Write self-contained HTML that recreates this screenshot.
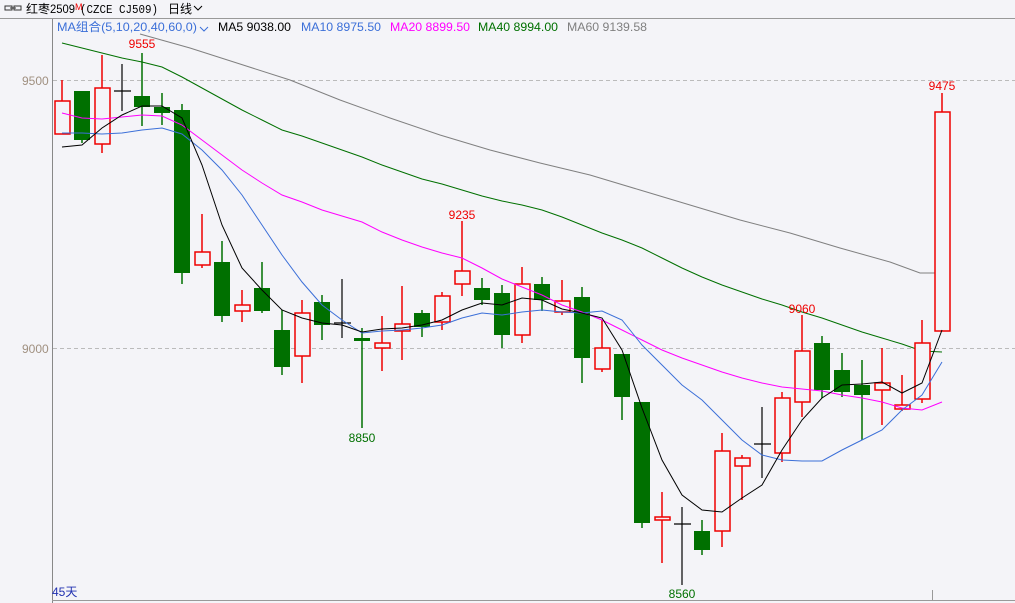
<!DOCTYPE html><html><head><meta charset="utf-8"><style>
body{margin:0;background:#f4f4f8;width:1015px;height:603px;overflow:hidden;font-family:"Liberation Sans","Noto Sans CJK SC",sans-serif}
</style></head><body>
<svg width="1015" height="603" xmlns="http://www.w3.org/2000/svg" style="position:absolute;left:0;top:0">
<rect width="1015" height="603" fill="#f4f4f8"/>
<g font-family="Liberation Sans,Noto Sans CJK SC,sans-serif" font-size="12">
<rect x="5" y="6" width="7" height="4" fill="none" stroke="#333"/><rect x="14" y="6" width="7" height="4" fill="none" stroke="#333"/><line x1="10" y1="8" x2="16" y2="8" stroke="#333"/>
<text x="26" y="13" fill="#000">红枣</text><text x="50" y="13" fill="#000" textLength="25" lengthAdjust="spacingAndGlyphs">2509</text><text x="75" y="10" fill="#e00" font-size="9">M</text>
<text x="80" y="13" fill="#000" font-family="Liberation Mono,monospace" font-size="12" textLength="78" lengthAdjust="spacingAndGlyphs">(CZCE CJ509)</text>
<text x="168" y="13" fill="#000">日线</text><path d="M194 6l4 4 4-4" stroke="#000" fill="none"/>
<line x1="0" y1="18.5" x2="1015" y2="18.5" stroke="#999"/>
<text x="57" y="31" fill="#3b6fd8" textLength="140" lengthAdjust="spacingAndGlyphs">MA组合(5,10,20,40,60,0)</text><path d="M200 27l4 4 4-4" stroke="#3b6fd8" fill="none"/>
<text x="218" y="31" fill="#000" textLength="73" lengthAdjust="spacingAndGlyphs">MA5 9038.00</text>
<text x="301" y="31" fill="#3b6fd8" textLength="80" lengthAdjust="spacingAndGlyphs">MA10 8975.50</text>
<text x="390" y="31" fill="#f0f" textLength="80" lengthAdjust="spacingAndGlyphs">MA20 8899.50</text>
<text x="478" y="31" fill="#007000" textLength="80" lengthAdjust="spacingAndGlyphs">MA40 8994.00</text>
<text x="567" y="31" fill="#808080" textLength="80" lengthAdjust="spacingAndGlyphs">MA60 9139.58</text>
</g>
<line x1="52.5" y1="19" x2="52.5" y2="603" stroke="#888"/>
<line x1="52" y1="600.5" x2="1015" y2="600.5" stroke="#999"/>
<line x1="932.5" y1="590" x2="932.5" y2="600" stroke="#999"/>
<line x1="53" y1="80.5" x2="1015" y2="80.5" stroke="#bbb" stroke-dasharray="4,3"/>
<line x1="53" y1="348.5" x2="1015" y2="348.5" stroke="#bbb" stroke-dasharray="4,3"/>
<text x="22" y="85" fill="#a09080" font-size="12" font-family="Liberation Sans,sans-serif">9500</text>
<text x="22" y="353" fill="#a09080" font-size="12" font-family="Liberation Sans,sans-serif">9000</text>
<g fill="none" stroke-width="1">
<polyline stroke="#808080" points="140,34 190,48 240,64 290,80 340,100 390,118 440,135 490,150 540,163 590,175 640,190 690,205 740,220 790,233 840,248 890,262 920,273 942,273"/>
<polyline stroke="#007000" points="62,43 82,48 102,53 122,58 142,62 162,67 182,77 202,88 222,99 242,110 262,120 282,130 302,136 322,143 342,150 362,157 382,165 402,172 422,179 442,184 462,190 482,196 502,201 522,205 542,210 562,217 582,225 602,233 622,240 642,248 662,258 682,268 702,277 722,285 742,292 762,299 782,305 802,312 822,318 842,325 862,332 882,338 902,344 922,351 942,352"/>
</g>
<g>
<g stroke="#e00" stroke-width="1.5" fill="#f4f4f8">
<line x1="62" y1="80" x2="62" y2="134"/><rect x="55" y="101" width="15" height="33"/>
<line x1="102" y1="55" x2="102" y2="153"/><rect x="95" y="88" width="15" height="56"/>
<line x1="202" y1="214" x2="202" y2="268"/><rect x="195" y="252" width="15" height="13"/>
<line x1="242" y1="290" x2="242" y2="322"/><rect x="235" y="305" width="15" height="6"/>
<line x1="302" y1="300" x2="302" y2="383"/><rect x="295" y="313" width="15" height="43"/>
<line x1="382" y1="316" x2="382" y2="371"/><rect x="375" y="343" width="15" height="5"/>
<line x1="402" y1="286" x2="402" y2="360"/><rect x="395" y="324" width="15" height="7"/>
<line x1="442" y1="292" x2="442" y2="330"/><rect x="435" y="296" width="15" height="26"/>
<line x1="462" y1="221" x2="462" y2="296"/><rect x="455" y="271" width="15" height="13"/>
<line x1="522" y1="267" x2="522" y2="343"/><rect x="515" y="284" width="15" height="51"/>
<line x1="562" y1="280" x2="562" y2="315"/><rect x="555" y="301" width="15" height="11"/>
<line x1="602" y1="320" x2="602" y2="372"/><rect x="595" y="348" width="15" height="21"/>
<line x1="662" y1="492" x2="662" y2="563"/><rect x="655" y="517" width="15" height="3"/>
<line x1="722" y1="433" x2="722" y2="547"/><rect x="715" y="451" width="15" height="80"/>
<line x1="742" y1="455" x2="742" y2="500"/><rect x="735" y="458" width="15" height="8"/>
<line x1="782" y1="392" x2="782" y2="462"/><rect x="775" y="398" width="15" height="55"/>
<line x1="802" y1="315" x2="802" y2="417"/><rect x="795" y="351" width="15" height="51"/>
<line x1="882" y1="348" x2="882" y2="425"/><rect x="875" y="383" width="15" height="7"/>
<line x1="902" y1="375" x2="902" y2="411"/><rect x="895" y="405" width="15" height="4"/>
<line x1="922" y1="320" x2="922" y2="403"/><rect x="915" y="343" width="15" height="56"/>
<line x1="942" y1="93" x2="942" y2="112"/><rect x="935" y="112" width="15" height="219"/>
</g>
<g stroke="#007000" stroke-width="1.5" fill="#007000">
<line x1="82" y1="91" x2="82" y2="143"/><rect x="74" y="91" width="16" height="49" stroke="none"/>
<line x1="142" y1="53" x2="142" y2="126"/><rect x="134" y="96" width="16" height="11" stroke="none"/>
<line x1="162" y1="93" x2="162" y2="125"/><rect x="154" y="107" width="16" height="6" stroke="none"/>
<line x1="182" y1="104" x2="182" y2="284"/><rect x="174" y="110" width="16" height="163" stroke="none"/>
<line x1="222" y1="241" x2="222" y2="322"/><rect x="214" y="262" width="16" height="54" stroke="none"/>
<line x1="262" y1="262" x2="262" y2="313"/><rect x="254" y="288" width="16" height="23" stroke="none"/>
<line x1="282" y1="310" x2="282" y2="375"/><rect x="274" y="330" width="16" height="37" stroke="none"/>
<line x1="322" y1="295" x2="322" y2="340"/><rect x="314" y="302" width="16" height="23" stroke="none"/>
<line x1="362" y1="328" x2="362" y2="428"/><rect x="354" y="338" width="16" height="3" stroke="none"/>
<line x1="422" y1="310" x2="422" y2="337"/><rect x="414" y="313" width="16" height="14" stroke="none"/>
<line x1="482" y1="278" x2="482" y2="305"/><rect x="474" y="288" width="16" height="12" stroke="none"/>
<line x1="502" y1="285" x2="502" y2="348"/><rect x="494" y="293" width="16" height="42" stroke="none"/>
<line x1="542" y1="277" x2="542" y2="311"/><rect x="534" y="284" width="16" height="16" stroke="none"/>
<line x1="582" y1="287" x2="582" y2="383"/><rect x="574" y="297" width="16" height="61" stroke="none"/>
<line x1="622" y1="354" x2="622" y2="420"/><rect x="614" y="354" width="16" height="43" stroke="none"/>
<line x1="642" y1="402" x2="642" y2="528"/><rect x="634" y="402" width="16" height="121" stroke="none"/>
<line x1="702" y1="520" x2="702" y2="555"/><rect x="694" y="531" width="16" height="19" stroke="none"/>
<line x1="822" y1="336" x2="822" y2="398"/><rect x="814" y="343" width="16" height="47" stroke="none"/>
<line x1="842" y1="353" x2="842" y2="397"/><rect x="834" y="370" width="16" height="22" stroke="none"/>
<line x1="862" y1="360" x2="862" y2="440"/><rect x="854" y="385" width="16" height="10" stroke="none"/>
</g>
<g stroke="#000" stroke-width="1.2">
<line x1="122" y1="64" x2="122" y2="111"/><line x1="114" y1="91" x2="131" y2="91"/>
<line x1="342" y1="279" x2="342" y2="338"/><line x1="334" y1="323" x2="351" y2="323"/>
<line x1="682" y1="507" x2="682" y2="585"/><line x1="674" y1="524" x2="691" y2="524"/>
<line x1="762" y1="407" x2="762" y2="478"/><line x1="754" y1="444" x2="771" y2="444"/>
</g>
</g>
<g fill="none" stroke-width="1">
<polyline stroke="#f0f" points="62,113 82,118 102,119 122,117 142,115 162,116 182,125 202,140 222,155 242,170 262,183 282,195 302,202 322,210 342,216 362,222 382,232 402,240 422,247 442,253 462,258 482,268 502,279 522,287 542,295 562,305 582,312 602,320 622,330 642,340 662,350 682,358 702,365 722,372 742,378 762,383 782,387 802,389 822,391 842,395 862,398 882,402 902,408 922,410 942,402"/>
<polyline stroke="#3b6fd8" points="62,133 82,133 102,134 122,133 142,130 162,128 182,134 202,150 222,170 242,195 262,225 282,255 302,282 322,305 342,320 362,333 382,331 402,330 422,328 442,325 462,318 482,313 502,315 522,312 542,310 562,312 582,313 602,311 622,320 642,345 662,365 682,385 702,400 722,420 742,440 762,455 782,460 802,461 822,461 842,450 862,440 882,430 902,410 922,395 942,362"/>
<polyline stroke="#000" points="62,147 82,145 102,128 122,115 142,106 162,106 182,118 202,165 222,225 242,268 262,290 282,310 302,318 322,323 342,325 362,332 382,329 402,328 422,325 442,320 462,310 482,303 502,305 522,298 542,300 562,309 582,313 602,318 622,350 642,408 662,460 682,495 702,510 722,512 742,498 762,485 782,450 802,420 822,398 842,385 862,384 882,382 902,393 922,383 942,330"/>
</g>
<g font-family="Liberation Sans,sans-serif" font-size="12" text-anchor="middle">
<text x="142" y="48" fill="#e00">9555</text>
<text x="462" y="219" fill="#e00">9235</text>
<text x="802" y="313" fill="#e00">9060</text>
<text x="942" y="90" fill="#e00">9475</text>
<text x="362" y="442" fill="#007000">8850</text>
<text x="682" y="598" fill="#007000">8560</text>
</g>
<text x="52" y="596" fill="#2030b0" font-size="12" font-family="Liberation Sans,Noto Sans CJK SC,sans-serif">45天</text>
</svg>
</body></html>
